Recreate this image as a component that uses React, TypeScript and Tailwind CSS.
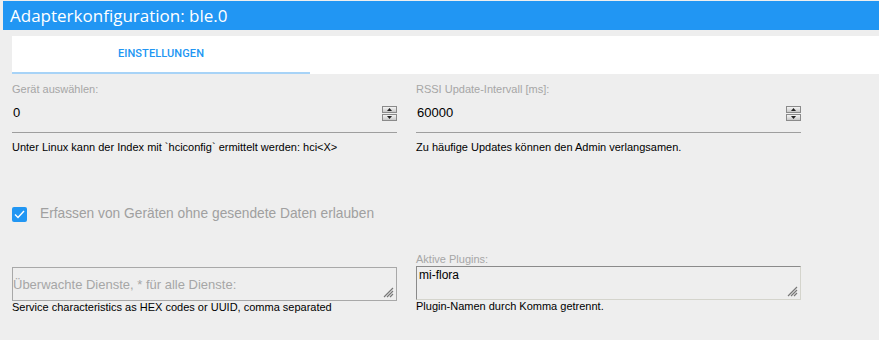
import React from "react";

function Spinner() {
  return (
    <div className="flex flex-col gap-[1px] w-[15px]">
      <div className="h-[7px] bg-gradient-to-b from-[#f4f4f4] to-[#c8c8c8] border border-[#8a8a8a] flex items-center justify-center">
        <svg width="5" height="3" viewBox="0 0 5 3"><path d="M2.5 0L5 3H0z" fill="#222" /></svg>
      </div>
      <div className="h-[7px] bg-gradient-to-b from-[#f4f4f4] to-[#c8c8c8] border border-[#8a8a8a] flex items-center justify-center">
        <svg width="5" height="3" viewBox="0 0 5 3"><path d="M0 0H5L2.5 3z" fill="#222" /></svg>
      </div>
    </div>
  );
}

function Grip() {
  return (
    <svg className="absolute right-[2px] bottom-[2px]" width="11" height="11" viewBox="0 0 11 11">
      <path d="M10 1L1 10M10 4L4 10M10 7L7 10" stroke="#777" strokeWidth="1.2" />
    </svg>
  );
}

function NumberField({ label, value, help }: { label: string; value: string; help: string }) {
  return (
    <div className="w-[385px] flex flex-col">
      <div className="h-[16px] text-[11px] leading-[16px] text-[#a6a6a6]">{label}</div>
      <div className="h-[36px] flex items-center justify-between border-b border-[#9e9e9e] pb-[3px]">
        <span className="text-[13px] text-black ml-[1px]">{value}</span>
        <Spinner />
      </div>
      <div className="mt-[7px] text-[11px] leading-[14px] text-black">{help}</div>
    </div>
  );
}

export default function App() {
  return (
    <div className="w-[879px] h-[340px] bg-[#eeeeee] overflow-hidden pt-[1px]" style={{ fontFamily: "'Liberation Sans', Arial, sans-serif" }}>
      <div className="ml-[3px] h-[29px] bg-[#2196f3] flex items-center pl-[7px]">
        <span className="text-white text-[17px]" style={{ fontFamily: "'Open Sans', sans-serif" }}>Adapterkonfiguration: ble.0</span>
      </div>
      <div className="ml-[12px] mt-[6px] h-[38px] bg-white flex">
        <div className="w-[298px] h-full flex items-center justify-center border-b-2 border-[#a7d3f7]">
          <span className="text-[11px] font-medium text-[#2196f3] tracking-[0.1px]" style={{ fontFamily: "Roboto, sans-serif" }}>EINSTELLUNGEN</span>
        </div>
      </div>
      <div className="pl-[12px] mt-[7px] flex gap-[19px]">
        <NumberField label="Gerät auswählen:" value="0" help="Unter Linux kann der Index mit `hciconfig` ermittelt werden: hci<X>" />
        <NumberField label="RSSI Update-Intervall [ms]:" value="60000" help="Zu häufige Updates können den Admin verlangsamen." />
      </div>
      <div className="pl-[12px] mt-[50px] flex items-center gap-[13px]">
        <div className="w-[15px] h-[15px] bg-[#2196f3] rounded-[2px] flex items-center justify-center">
          <svg width="11" height="9" viewBox="0 0 11 9"><path d="M1 4.5L4 7.5L10 1" stroke="white" strokeWidth="1.4" fill="none" /></svg>
        </div>
        <span className="text-[13.75px] text-[#a0a0a0]">Erfassen von Geräten ohne gesendete Daten erlauben</span>
      </div>
      <div className="pl-[12px] mt-[29px] flex gap-[19px]">
        <div className="w-[385px] flex flex-col">
          <div className="h-[13px]" />
          <div className="relative h-[34px] border border-[#a8a8a8] flex items-end pb-[7px] leading-[16px]">
            <span className="text-[13px] text-[#a6a6a6] leading-[16px]">Überwachte Dienste, * für alle Dienste:</span>
            <Grip />
          </div>
          <div className="text-[11px] leading-[14px] text-black mt-[-1px]">Service characteristics as HEX codes or UUID, comma separated</div>
        </div>
        <div className="w-[385px] flex flex-col">
          <div className="h-[13px] text-[11px] leading-[13px] text-[#a6a6a6] mt-[-1px]">Aktive Plugins:</div>
          <div className="relative h-[34px] border border-[#d4d4cc] border-t-[#8a8a8a] border-l-[#8a8a8a] px-[2px] pt-[1px] text-[12px] leading-[14px]">
            <span className="text-[12px] text-black leading-[14px]">mi-flora</span>
            <Grip />
          </div>
          <div className="text-[11px] leading-[14px] text-black mt-[-1px]">Plugin-Namen durch Komma getrennt.</div>
        </div>
      </div>
    </div>
  );
}
